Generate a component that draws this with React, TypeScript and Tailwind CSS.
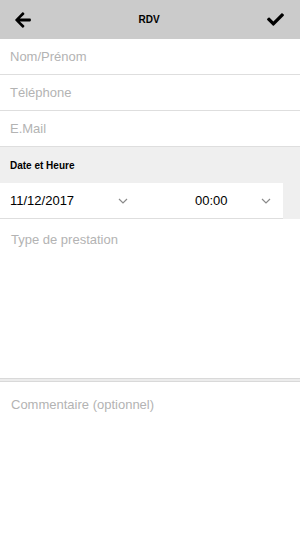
import { FaArrowLeft, FaCheck } from "react-icons/fa";

const Chevron = () => (
  <svg width="10" height="6" viewBox="0 0 10 6" fill="none" className="text-[#8a8a8a]">
    <path d="M1 1l4 4 4-4" stroke="currentColor" strokeWidth="1.2" />
  </svg>
);

const Field = ({ label }: { label: string }) => (
  <div className="flex h-[36px] items-center border-b border-[#dedede] px-[10px] text-[13px] text-[#b3b3b3]">
    {label}
  </div>
);

export default function App() {
  return (
    <div className="flex h-[533px] w-[300px] flex-col bg-white font-['Liberation_Sans',Arial,sans-serif]">
      <div className="flex h-[39px] items-center justify-between bg-[#cbcbcb] pl-[13px] pr-[14px]">
        <FaArrowLeft className="h-[18px] w-[20px] text-black" />
        <span className="text-[10px] font-bold text-black">RDV</span>
        <FaCheck className="h-[17px] w-[21px] text-black" />
      </div>

      <Field label="Nom/Prénom" />
      <Field label="Téléphone" />
      <Field label="E.Mail" />

      <div className="flex h-[36px] items-center bg-[#efefef] px-[10px] text-[10px] font-bold text-black">
        Date et Heure
      </div>

      <div className="flex h-[36px] bg-[#efefef]">
        <div className="flex w-[283px] items-center border-b border-[#dedede] bg-white pl-[10px] text-[13px] text-black">
          <span className="w-[108px]">11/12/2017</span>
          <Chevron />
          <span className="ml-[67px] w-[66px]">00:00</span>
          <Chevron />
        </div>
      </div>

      <div className="h-[159px] px-[11px] pt-[11px] text-[13px] text-[#b3b3b3]">
        Type de prestation
      </div>

      <div className="h-[4px] border-t border-b border-[#d9d9d9] bg-[#ececec]" />

      <div className="flex-1 px-[11px] pt-[13px] text-[13px] text-[#b3b3b3]">
        Commentaire (optionnel)
      </div>
    </div>
  );
}
